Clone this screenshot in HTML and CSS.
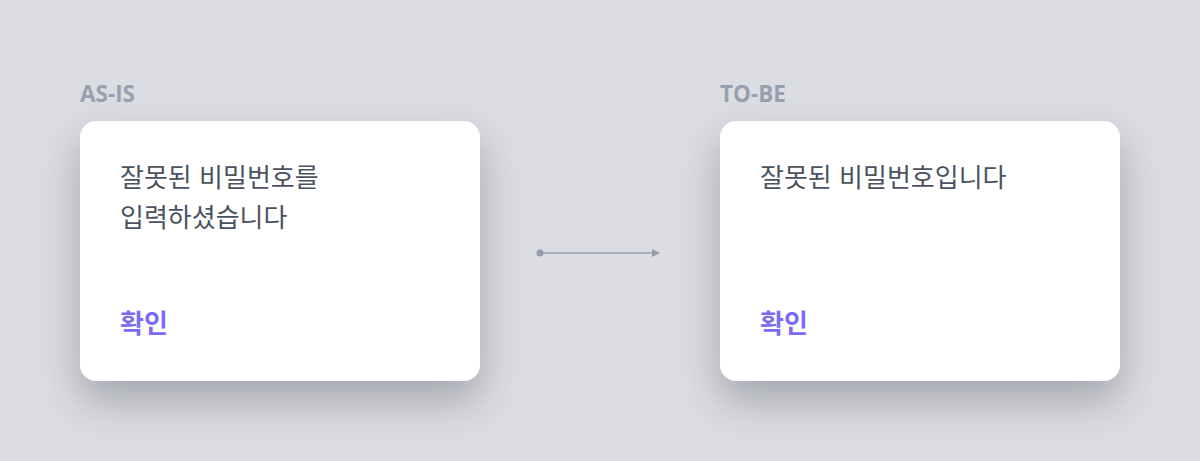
FILE: index.html
```html
<!DOCTYPE html>
<html lang="ko">
<head>
<meta charset="utf-8">
<link rel="stylesheet" href="styles.css">
</head>
<body>
<main class="compare">
  <section class="column">
    <h2 class="label">AS-IS</h2>
    <div class="dialog">
      <p class="message">잘못된 비밀번호를<br>입력하셨습니다</p>
      <span class="confirm">확인</span>
    </div>
  </section>
  <div class="connector">
    <svg class="arrow" width="126" height="12" viewBox="0 0 126 12">
      <circle cx="4" cy="6" r="3.5" fill="#959dab"/>
      <line x1="4" y1="6" x2="116" y2="6" stroke="#959dab" stroke-width="1.3"/>
      <path d="M116 2 L124 6 L116 10 Z" fill="#959dab"/>
    </svg>
  </div>
  <section class="column">
    <h2 class="label">TO-BE</h2>
    <div class="dialog">
      <p class="message">잘못된 비밀번호입니다</p>
      <span class="confirm">확인</span>
    </div>
  </section>
</main>
</body>
</html>
```

FILE: styles.css
```css
* { box-sizing: border-box; }
html, body {
  margin: 0;
  padding: 0;
  background: #dcdde2;
  width: 1200px;
  height: 461px;
  overflow: hidden;
}
body {
  font-family: "Noto Sans CJK KR", "Noto Sans", sans-serif;
}
.compare {
  display: flex;
  align-items: flex-start;
  padding: 77px 0 0 80px;
}
.column {
  width: 400px;
  display: flex;
  flex-direction: column;
}
.label {
  margin: 0 0 10px 0;
  font-family: "Open Sans", "Noto Sans", sans-serif;
  font-weight: 700;
  font-size: 22.5px;
  line-height: 34px;
  color: #97a0af;
  letter-spacing: 0;
}
.dialog {
  height: 260px;
  background: #ffffff;
  border-radius: 16px;
  box-shadow: 0 20px 40px rgba(40, 44, 60, 0.3);
  padding: 35px 40px 39px 40px;
  display: flex;
  flex-direction: column;
  justify-content: space-between;
  align-items: flex-start;
}
.message {
  margin: 0;
  font-size: 26px;
  line-height: 40px;
  color: #4b5360;
  font-weight: 400;
}
.confirm {
  font-size: 26px;
  line-height: 40px;
  font-weight: 700;
  color: #7a6cf7;
}
.connector {
  width: 240px;
  height: 260px;
  margin-top: 44px;
  display: flex;
  align-items: center;
  justify-content: center;
}
.arrow {
  display: block;
  margin-left: -2px;
  margin-top: 4px;
}
```
